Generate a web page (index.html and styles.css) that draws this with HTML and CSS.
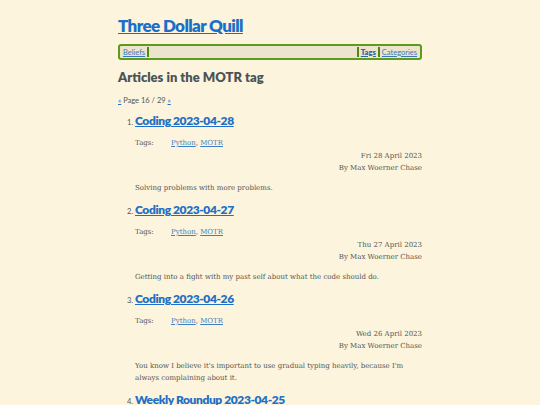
FILE: index.html
```html
<!DOCTYPE html>
<html>
<head>
<meta charset="utf-8">
<link rel="stylesheet" href="styles.css">
</head>
<body>
<div class="page">
  <h1 class="site-title"><a href="#">Three Dollar Quill</a></h1>
  <nav class="nav">
    <a href="#" class="nav-link">Beliefs</a>
    <span class="sep"></span>
    <span class="spacer"></span>
    <span class="sep"></span>
    <a href="#" class="nav-link bold">Tags</a>
    <span class="sep"></span>
    <a href="#" class="nav-link">Categories</a>
  </nav>
  <h2 class="section-title">Articles in the MOTR tag</h2>
  <p class="pager"><a href="#">«</a> Page 16 / 29 <a href="#">»</a></p>
  <ol class="articles">
    <li class="article">
      <h3 class="article-title"><a href="#">Coding 2023-04-28</a></h3>
      <div class="tags"><span class="tags-label">Tags:</span><span><a href="#">Python</a>, <a href="#">MOTR</a></span></div>
      <div class="meta">Fri 28 April 2023</div>
      <div class="meta">By Max Woerner Chase</div>
      <p class="summary">Solving problems with more problems.</p>
    </li>
    <li class="article">
      <h3 class="article-title"><a href="#">Coding 2023-04-27</a></h3>
      <div class="tags"><span class="tags-label">Tags:</span><span><a href="#">Python</a>, <a href="#">MOTR</a></span></div>
      <div class="meta">Thu 27 April 2023</div>
      <div class="meta">By Max Woerner Chase</div>
      <p class="summary">Getting into a fight with my past self about what the code should do.</p>
    </li>
    <li class="article">
      <h3 class="article-title"><a href="#">Coding 2023-04-26</a></h3>
      <div class="tags"><span class="tags-label">Tags:</span><span><a href="#">Python</a>, <a href="#">MOTR</a></span></div>
      <div class="meta">Wed 26 April 2023</div>
      <div class="meta">By Max Woerner Chase</div>
      <p class="summary">You know I believe it's important to use gradual typing heavily, because I'm always complaining about it.</p>
    </li>
    <li class="article">
      <h3 class="article-title"><a href="#">Weekly Roundup 2023-04-25</a></h3>
      <div class="tags"><span class="tags-label">Tags:</span><span><a href="#">Python</a>, <a href="#">MOTR</a></span></div>
      <div class="meta">Tue 25 April 2023</div>
      <div class="meta">By Max Woerner Chase</div>
    </li>
  </ol>
</div>
</body>
</html>
```
FILE: styles.css
```css
html, body {
  margin: 0;
  padding: 0;
  background: #fcf4dc;
}
body {
  font-family: "DejaVu Serif", serif;
  color: #555555;
  font-size: 8px;
}
.page {
  width: 304px;
  margin: 0 auto;
  padding-top: 14px;
}
a {
  color: #1f6fc6;
}
.site-title {
  margin: 0;
  font-family: Lato, sans-serif;
  font-size: 17px;
  font-weight: 800;
  letter-spacing: -0.6px;
  line-height: 24px;
}
.site-title a {
  color: #1a6fc9;
}
.nav {
  display: flex;
  align-items: center;
  margin-top: 6px;
  height: 12px;
  border: 2px solid #5e9a1c;
  border-radius: 3px;
  background: #ede4cf;
  font-family: Lato, sans-serif;
  font-size: 7.5px;
  padding: 0 2px;
}
.nav-link {
  color: #3d78b8;
  padding: 0 1px;
}
.nav-link.bold {
  font-weight: 800;
  color: #2a66a8;
}
.sep {
  width: 2px;
  height: 10px;
  background: #4e8a12;
  margin: 0 1px;
}
.spacer {
  flex: 1;
}
.section-title {
  margin: 8px 0 0;
  font-family: Lato, sans-serif;
  font-size: 13px;
  font-weight: 800;
  color: #4a5358;
  line-height: 18px;
}
.pager {
  margin: 10px 0 0;
  font-family: Lato, sans-serif;
  font-size: 7.5px;
  color: #555;
}
.articles {
  margin: 7px 0 0;
  padding-left: 17px;
  font-size: 7px;
}
.articles li::marker {
  font-family: Lato, sans-serif;
  font-size: 7.5px;
}
.article {
  margin-bottom: 7px;
}
.article-title {
  margin: 0;
  font-family: Lato, sans-serif;
  font-size: 12px;
  font-weight: 800;
  letter-spacing: -0.4px;
  line-height: 18px;
}
.tags {
  display: flex;
  margin-top: 8px;
  line-height: 11px;
}
.tags-label {
  width: 36px;
}
.tags a {
  color: #3f7fc4;
}
.meta {
  text-align: right;
  line-height: 12px;
}
.tags + .meta {
  margin-top: 1px;
}
.summary {
  margin: 8px 0 0;
  line-height: 12px;
}
```
